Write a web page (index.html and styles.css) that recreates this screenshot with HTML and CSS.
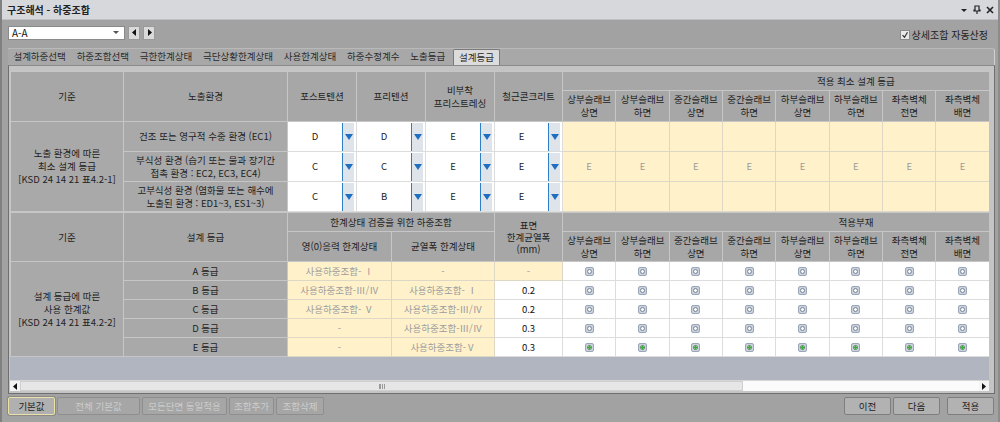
FILE: index.html
```html
<!DOCTYPE html>
<html lang="ko">
<head>
    <meta charset="UTF-8">
    <title>구조해석 - 하중조합</title>
    <link rel="stylesheet" href="styles.css">
</head>
<body>
<div class="window">
    <div class="titlebar">
        <span class="title">구조해석 - 하중조합</span>
        <span class="wnd-icons">
            <svg width="8" height="8" viewBox="0 0 8 8"><polygon points="1,3 7,3 4,6" fill="#222"/></svg>
            <svg width="8" height="9" viewBox="0 0 8 9"><path d="M2 1h4v4h1v1H1V5h1z M4 6v3" fill="none" stroke="#222" stroke-width="1.2"/></svg>
            <svg width="8" height="8" viewBox="0 0 8 8"><path d="M1 1l6 6M7 1l-6 6" stroke="#222" stroke-width="1.6"/></svg>
        </span>
    </div>

    <div class="toolbar">
        <div class="combo">
            <span>A-A</span>
            <svg width="6" height="4" viewBox="0 0 6 4"><polygon points="0,0 6,0 3,3" fill="#555"/></svg>
        </div>
        <button class="nav"><svg width="5" height="7" viewBox="0 0 5 7"><polygon points="4,0 4,7 0,3.5" fill="#111"/></svg></button>
        <button class="nav"><svg width="5" height="7" viewBox="0 0 5 7"><polygon points="1,0 1,7 5,3.5" fill="#111"/></svg></button>
        <label class="auto">
            <span class="chk"><svg width="8" height="8" viewBox="0 0 8 8"><path d="M1.5 4.2l2 2 3-5" fill="none" stroke="#333" stroke-width="1.2"/></svg></span>
            상세조합 자동산정
        </label>
    </div>

    <div class="tabs">
        <span class="tab">설계하중선택</span>
        <span class="tab">하중조합선택</span>
        <span class="tab">극한한계상태</span>
        <span class="tab">극단상황한계상태</span>
        <span class="tab">사용한계상태</span>
        <span class="tab">하중수정계수</span>
        <span class="tab">노출등급</span>
        <span class="tab active">설계등급</span>
    </div>

    <div class="tabpage">
        <div class="grid-view">
            <!-- 노출 환경에 따른 최소 설계 등급 -->
            <table class="sheet">
                <colgroup>
                    <col class="c-base"><col class="c-env">
                    <col class="c-grade"><col class="c-grade"><col class="c-grade"><col class="c-rc">
                    <col class="c-part"><col class="c-part"><col class="c-part"><col class="c-part">
                    <col class="c-part"><col class="c-part"><col class="c-part"><col class="c-part">
                    <col class="c-part"><col class="c-part"><col class="c-part">
                </colgroup>
                <tr class="h-top">
                    <th rowspan="2">기준</th>
                    <th rowspan="2">노출환경</th>
                    <th rowspan="2">포스트텐션</th>
                    <th rowspan="2">프리텐션</th>
                    <th rowspan="2">비부착<br>프리스트레싱</th>
                    <th rowspan="2">철근콘크리트</th>
                    <th colspan="11">적용 최소 설계 등급</th>
                </tr>
                <tr class="h-sub">
                    <th>상부슬래브<br>상면</th><th>상부슬래브<br>하면</th>
                    <th>중간슬래브<br>상면</th><th>중간슬래브<br>하면</th>
                    <th>하부슬래브<br>상면</th><th>하부슬래브<br>하면</th>
                    <th>좌측벽체<br>전면</th><th>좌측벽체<br>배면</th>
                    <th></th><th></th><th></th>
                </tr>
                <tr class="r-env">
                    <td class="label" rowspan="3">노출 환경에 따른<br>최소 설계 등급<br>[KSD 24 14 21 표4.2-1]</td>
                    <td class="label">건조 또는 영구적 수중 환경 (EC1)</td>
                    <td class="dd"><div class="dd-box"><span class="val">D</span><span class="dd-btn"><svg width="8" height="6" viewBox="0 0 8 6"><polygon points="0,0 8,0 4,6" fill="#1e6fc0"/></svg></span></div></td>
                    <td class="dd"><div class="dd-box"><span class="val">D</span><span class="dd-btn"><svg width="8" height="6" viewBox="0 0 8 6"><polygon points="0,0 8,0 4,6" fill="#1e6fc0"/></svg></span></div></td>
                    <td class="dd"><div class="dd-box"><span class="val">E</span><span class="dd-btn"><svg width="8" height="6" viewBox="0 0 8 6"><polygon points="0,0 8,0 4,6" fill="#1e6fc0"/></svg></span></div></td>
                    <td class="dd"><div class="dd-box"><span class="val">E</span><span class="dd-btn"><svg width="8" height="6" viewBox="0 0 8 6"><polygon points="0,0 8,0 4,6" fill="#1e6fc0"/></svg></span></div></td>
                    <td class="ro"></td><td class="ro"></td><td class="ro"></td><td class="ro"></td>
                    <td class="ro"></td><td class="ro"></td><td class="ro"></td><td class="ro"></td>
                    <td class="ro"></td><td class="ro"></td><td class="ro"></td>
                </tr>
                <tr class="r-env">
                    <td class="label">부식성 환경 (습기 또는 물과 장기간<br>접촉 환경 : EC2, EC3, EC4)</td>
                    <td class="dd"><div class="dd-box"><span class="val">C</span><span class="dd-btn"><svg width="8" height="6" viewBox="0 0 8 6"><polygon points="0,0 8,0 4,6" fill="#1e6fc0"/></svg></span></div></td>
                    <td class="dd"><div class="dd-box"><span class="val">C</span><span class="dd-btn"><svg width="8" height="6" viewBox="0 0 8 6"><polygon points="0,0 8,0 4,6" fill="#1e6fc0"/></svg></span></div></td>
                    <td class="dd"><div class="dd-box"><span class="val">E</span><span class="dd-btn"><svg width="8" height="6" viewBox="0 0 8 6"><polygon points="0,0 8,0 4,6" fill="#1e6fc0"/></svg></span></div></td>
                    <td class="dd"><div class="dd-box"><span class="val">E</span><span class="dd-btn"><svg width="8" height="6" viewBox="0 0 8 6"><polygon points="0,0 8,0 4,6" fill="#1e6fc0"/></svg></span></div></td>
                    <td class="ro">E</td><td class="ro">E</td><td class="ro">E</td><td class="ro">E</td>
                    <td class="ro">E</td><td class="ro">E</td><td class="ro">E</td><td class="ro">E</td>
                    <td class="ro"></td><td class="ro"></td><td class="ro"></td>
                </tr>
                <tr class="r-env">
                    <td class="label">고부식성 환경 (염화물 또는 해수에<br>노출된 환경 : ED1~3, ES1~3)</td>
                    <td class="dd"><div class="dd-box"><span class="val">C</span><span class="dd-btn"><svg width="8" height="6" viewBox="0 0 8 6"><polygon points="0,0 8,0 4,6" fill="#1e6fc0"/></svg></span></div></td>
                    <td class="dd"><div class="dd-box"><span class="val">B</span><span class="dd-btn"><svg width="8" height="6" viewBox="0 0 8 6"><polygon points="0,0 8,0 4,6" fill="#1e6fc0"/></svg></span></div></td>
                    <td class="dd"><div class="dd-box"><span class="val">E</span><span class="dd-btn"><svg width="8" height="6" viewBox="0 0 8 6"><polygon points="0,0 8,0 4,6" fill="#1e6fc0"/></svg></span></div></td>
                    <td class="dd"><div class="dd-box"><span class="val">E</span><span class="dd-btn"><svg width="8" height="6" viewBox="0 0 8 6"><polygon points="0,0 8,0 4,6" fill="#1e6fc0"/></svg></span></div></td>
                    <td class="ro"></td><td class="ro"></td><td class="ro"></td><td class="ro"></td>
                    <td class="ro"></td><td class="ro"></td><td class="ro"></td><td class="ro"></td>
                    <td class="ro"></td><td class="ro"></td><td class="ro"></td>
                </tr>
            </table>

            <!-- 설계 등급에 따른 사용 한계값 -->
            <table class="sheet">
                <colgroup>
                    <col class="c-base"><col class="c-env">
                    <col class="c-limit"><col class="c-limit2"><col class="c-rc">
                    <col class="c-part"><col class="c-part"><col class="c-part"><col class="c-part">
                    <col class="c-part"><col class="c-part"><col class="c-part"><col class="c-part">
                    <col class="c-part"><col class="c-part"><col class="c-part">
                </colgroup>
                <tr class="h-top2">
                    <th rowspan="2">기준</th>
                    <th rowspan="2">설계 등급</th>
                    <th colspan="2">한계상태 검증을 위한 하중조합</th>
                    <th rowspan="2" class="tall">표면<br>한계균열폭<br>(mm)</th>
                    <th colspan="11">적용부재</th>
                </tr>
                <tr class="h-sub2">
                    <th>영(0)응력 한계상태</th><th>균열폭 한계상태</th>
                    <th>상부슬래브<br>상면</th><th>상부슬래브<br>하면</th>
                    <th>중간슬래브<br>상면</th><th>중간슬래브<br>하면</th>
                    <th>하부슬래브<br>상면</th><th>하부슬래브<br>하면</th>
                    <th>좌측벽체<br>전면</th><th>좌측벽체<br>배면</th>
                    <th></th><th></th><th></th>
                </tr>
                <tr class="r-grade">
                    <td class="label" rowspan="5">설계 등급에 따른<br>사용 한계값<br>[KSD 24 14 21 표4.2-2]</td>
                    <td class="label">A 등급</td>
                    <td class="ro">사용하중조합- Ⅰ</td><td class="ro">-</td><td class="ro">-</td>
                    <td><span class="radio"></span></td><td><span class="radio"></span></td><td><span class="radio"></span></td><td><span class="radio"></span></td>
                    <td><span class="radio"></span></td><td><span class="radio"></span></td><td><span class="radio"></span></td><td><span class="radio"></span></td>
                    <td><span class="radio"></span></td><td><span class="radio"></span></td><td><span class="radio"></span></td>
                </tr>
                <tr class="r-grade">
                    <td class="label">B 등급</td>
                    <td class="ro">사용하중조합-Ⅲ/Ⅳ</td><td class="ro">사용하중조합- Ⅰ</td><td class="num">0.2</td>
                    <td><span class="radio"></span></td><td><span class="radio"></span></td><td><span class="radio"></span></td><td><span class="radio"></span></td>
                    <td><span class="radio"></span></td><td><span class="radio"></span></td><td><span class="radio"></span></td><td><span class="radio"></span></td>
                    <td><span class="radio"></span></td><td><span class="radio"></span></td><td><span class="radio"></span></td>
                </tr>
                <tr class="r-grade">
                    <td class="label">C 등급</td>
                    <td class="ro">사용하중조합- Ⅴ</td><td class="ro">사용하중조합-Ⅲ/Ⅳ</td><td class="num">0.2</td>
                    <td><span class="radio"></span></td><td><span class="radio"></span></td><td><span class="radio"></span></td><td><span class="radio"></span></td>
                    <td><span class="radio"></span></td><td><span class="radio"></span></td><td><span class="radio"></span></td><td><span class="radio"></span></td>
                    <td><span class="radio"></span></td><td><span class="radio"></span></td><td><span class="radio"></span></td>
                </tr>
                <tr class="r-grade">
                    <td class="label">D 등급</td>
                    <td class="ro">-</td><td class="ro">사용하중조합-Ⅲ/Ⅳ</td><td class="num">0.3</td>
                    <td><span class="radio"></span></td><td><span class="radio"></span></td><td><span class="radio"></span></td><td><span class="radio"></span></td>
                    <td><span class="radio"></span></td><td><span class="radio"></span></td><td><span class="radio"></span></td><td><span class="radio"></span></td>
                    <td><span class="radio"></span></td><td><span class="radio"></span></td><td><span class="radio"></span></td>
                </tr>
                <tr class="r-grade">
                    <td class="label">E 등급</td>
                    <td class="ro">-</td><td class="ro">사용하중조합-Ⅴ</td><td class="num">0.3</td>
                    <td><span class="radio on"></span></td><td><span class="radio on"></span></td><td><span class="radio on"></span></td><td><span class="radio on"></span></td>
                    <td><span class="radio on"></span></td><td><span class="radio on"></span></td><td><span class="radio on"></span></td><td><span class="radio on"></span></td>
                    <td><span class="radio on"></span></td><td><span class="radio on"></span></td><td><span class="radio on"></span></td>
                </tr>
            </table>
        </div>

        <div class="hscroll">
            <span class="sb-arrow"><svg width="4" height="7" viewBox="0 0 4 7"><polygon points="4,0 4,7 0,3.5" fill="#111"/></svg></span>
            <span class="sb-thumb"><span class="grip"></span></span>
            <span class="sb-track"></span>
            <span class="sb-arrow"><svg width="4" height="7" viewBox="0 0 4 7"><polygon points="0,0 0,7 4,3.5" fill="#111"/></svg></span>
        </div>
    </div>

    <div class="footer">
        <div class="btn-group">
            <button class="btn focus w47">기본값</button>
            <button class="btn off w83">전체 기본값</button>
            <button class="btn off w85">모든단면 동일적용</button>
            <button class="btn off w45">조합추가</button>
            <button class="btn off w48">조합삭제</button>
        </div>
        <div class="btn-group">
            <button class="btn w47">이전</button>
            <button class="btn w47">다음</button>
            <button class="btn w47 gap">적용</button>
        </div>
    </div>
</div>
</body>
</html>
```

FILE: styles.css
```css
* {
    box-sizing: border-box;
}
body {
    margin: 0;
    width: 1000px;
    height: 422px;
    overflow: hidden;
    background-color: #a2a2a2;
    font-family: "Noto Sans CJK KR", "Noto Sans", sans-serif;
    font-size: 9.5px;
    color: #222;
}
.window {
    height: 422px;
    display: flex;
    flex-direction: column;
    border-left: 2px solid #808080;
    border-right: 2px solid #8c8c8c;
}

/* title */
.titlebar {
    height: 20px;
    flex: none;
    display: flex;
    align-items: center;
    justify-content: space-between;
    padding: 0 4px 0 5px;
    background-color: #d6d8dc;
    border-bottom: 1px solid #bfc1c5;
}
.title {
    font-size: 10px;
    font-weight: bold;
    color: #222;
}
.wnd-icons {
    display: flex;
    gap: 5px;
    align-items: center;
}

/* toolbar */
.toolbar {
    height: 28px;
    flex: none;
    display: flex;
    align-items: center;
    padding: 0 6px 3px 6px;
}
.combo {
    width: 117px;
    height: 14px;
    display: flex;
    align-items: center;
    justify-content: space-between;
    padding: 0 5px 0 3px;
    background-color: #fff;
    border: 1px solid #8a8a8a;
    font-size: 10px;
    color: #111;
}
.nav {
    width: 12px;
    height: 14px;
    margin-left: 3px;
    padding: 0;
    display: flex;
    align-items: center;
    justify-content: center;
    background-color: #dadada;
    border: 1px solid #9a9a9a;
}
.auto {
    margin-left: auto;
    margin-right: 4px;
    margin-top: 4px;
    display: flex;
    align-items: center;
    gap: 2px;
    font-size: 10px;
    color: #222;
}
.chk {
    width: 10px;
    height: 10px;
    display: flex;
    align-items: center;
    justify-content: center;
    background-color: #e8e8e8;
    border: 1px solid #8a8a8a;
}

/* tabs */
.tabs {
    height: 17px;
    flex: none;
    display: flex;
    align-items: flex-end;
    margin: 0 3px 0 6px;
    background-color: #a8a8a8;
    border-top: 1px solid #b9b9b9;
    border-right: 1px solid #d0d0d0;
    border-top-right-radius: 3px;
}
.tab {
    height: 16px;
    line-height: 15px;
    padding: 0 5.4px;
    color: #2a2a2a;
}
.tab.active {
    background-color: #dcdcdc;
    border: 1px solid #7a7a7a;
    border-bottom: none;
    border-radius: 2px 2px 0 0;
    margin-left: 2px;
}

/* tab page */
.tabpage {
    height: 329px;
    flex: none;
    margin: 0 3px 0 6px;
    padding: 5px 5px 2px 1px;
    background-color: #c4c4c4;
    border: 1px solid #6f6f6f;
    border-top-color: #8a8a8a;
}
.grid-view {
    width: 979px;
    height: 309px;
    overflow: hidden;
    background-color: #b1b5bf;
}
.sheet {
    width: 1139px;
    table-layout: fixed;
    border-collapse: collapse;
}
.sheet col.c-base { width: 113px; }
.sheet col.c-env { width: 164px; }
.sheet col.c-grade { width: 69px; }
.sheet col.c-rc { width: 68px; }
.sheet col.c-limit { width: 104px; }
.sheet col.c-limit2 { width: 103px; }
.sheet col.c-part { width: 53.35px; }

.sheet th,
.sheet td {
    padding: 0;
    text-align: center;
    vertical-align: middle;
    font-weight: normal;
    border: 1px solid #c6c6c6;
    overflow: hidden;
    white-space: nowrap;
}
.sheet th {
    background-color: #a7a7a7;
    color: #222;
    line-height: 13px;
}
.sheet th.tall {
    line-height: 12px;
}
.sheet td {
    background-color: #fff;
    border-color: #dcdcdc;
    line-height: 13px;
}
.sheet td.label {
    background-color: #a9a9a9;
    border-color: #c6c6c6;
    color: #222;
}
.sheet td.ro {
    background-color: #fff2cb;
    border-color: #ddd8c6;
    color: #9c9c9c;
}
.sheet td.num {
    color: #111;
}
.h-top { height: 19px; }
.h-top2 { height: 19px; }
.h-sub { height: 31px; }
.h-sub2 { height: 30px; }
.r-env { height: 30px; }
.r-grade { height: 19px; }

/* drop-down cell */
.dd-box {
    height: 28px;
    display: flex;
    align-items: center;
    padding-right: 2px;
}
.dd-box .val {
    flex: 1;
    color: #222;
}
.dd-btn {
    width: 12px;
    height: 28px;
    display: flex;
    align-items: center;
    justify-content: center;
    background-color: #dfe4ea;
    border-left: 1px solid #2f7fc6;
}

/* radio */
.radio {
    display: inline-block;
    width: 9px;
    height: 9px;
    vertical-align: middle;
    background-color: #c9d2de;
    border: 1px solid #9ba7b8;
    border-radius: 2px;
    position: relative;
}
.radio::after {
    content: "";
    position: absolute;
    left: 1px;
    top: 1px;
    width: 5px;
    height: 5px;
    border-radius: 50%;
    background-color: #f4f6f8;
    border: 1px solid #7c8794;
    box-sizing: border-box;
}
.radio.on::after {
    background: radial-gradient(circle, #2db82d 0 55%, #bfe6bf 60%);
    border-color: #5d8a5d;
}

/* horizontal scrollbar */
.hscroll {
    height: 11px;
    width: 979px;
    display: flex;
    background-color: #f3f3f3;
    border-top: 1px solid #d6d6d6;
}
.sb-arrow {
    width: 10px;
    display: flex;
    align-items: center;
    justify-content: center;
}
.sb-thumb {
    width: 723px;
    display: flex;
    align-items: center;
    justify-content: center;
    background-color: #e6e6e6;
    border: 1px solid #cfcfcf;
}
.grip {
    width: 6px;
    height: 5px;
    border-left: 1px solid #9a9a9a;
    border-right: 1px solid #9a9a9a;
    background: repeating-linear-gradient(90deg, #9a9a9a 0 1px, transparent 1px 2px);
}
.sb-track {
    flex: 1;
    background-color: #fbfbfb;
}

/* footer */
.footer {
    height: 28px;
    flex: none;
    display: flex;
    justify-content: space-between;
    padding: 3px 4px 0 6px;
}
.btn-group {
    display: flex;
    gap: 2px;
}
.btn {
    height: 18px;
    padding: 0;
    font-family: inherit;
    font-size: 9.5px;
    color: #222;
    background-color: #b2b2b2;
    border: 1px solid #7e7e7e;
    border-radius: 2px;
}
.btn.off {
    color: #cdcdcd;
    background-color: #a6a6a6;
    border-color: #8e8e8e;
}
.btn.focus {
    background-color: #b0b0b0;
    border-color: #ebe1a6;
    box-shadow: 0 0 0 1px #8a8a8a;
}
.btn.gap {
    margin-left: 5px;
}
.w45 { width: 45px; }
.w47 { width: 47px; }
.w48 { width: 48px; }
.w83 { width: 83px; }
.w85 { width: 85px; }
```
